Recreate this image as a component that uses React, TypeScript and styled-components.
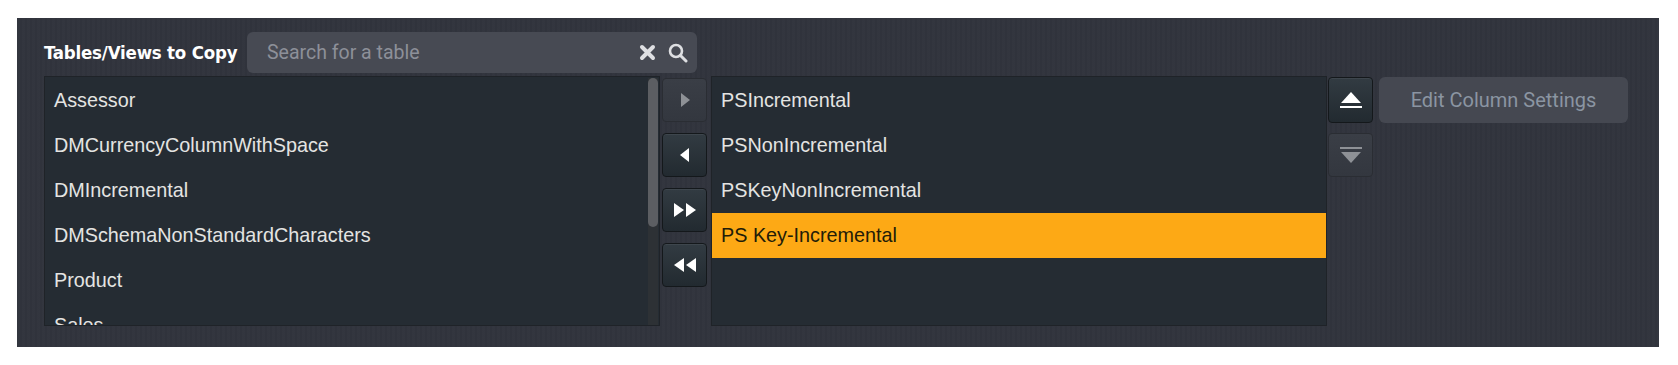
import React from 'react'
import styled, { createGlobalStyle } from 'styled-components'

const GlobalStyle = createGlobalStyle`
  html, body {
    margin: 0;
    padding: 0;
    background: #ffffff;
  }
`

const Panel = styled.div`
  box-sizing: border-box;
  width: 1642px;
  height: 329px;
  margin: 18px 0 0 17px;
  padding: 14px 0 0 27px;
  background-color: #31343d;
  background-image: repeating-linear-gradient(90deg, rgba(255,255,255,0.008) 0px, rgba(255,255,255,0.008) 3px, rgba(0,0,0,0.02) 3px, rgba(0,0,0,0.02) 5px);
  overflow: hidden;
`

const Header = styled.div`
  display: flex;
  align-items: center;
  gap: 12px;
  height: 41px;
  margin-bottom: 3px;
`

const Label = styled.div`
  font-family: "DejaVu Sans Condensed", "DejaVu Sans", sans-serif;
  font-stretch: condensed;
  font-weight: bold;
  font-size: 18.5px;
  color: #ffffff;
  letter-spacing: -0.2px;
  width: 191px;
  white-space: nowrap;
`

const SearchBox = styled.div`
  display: flex;
  align-items: center;
  box-sizing: border-box;
  width: 450px;
  height: 41px;
  padding: 0 9px 0 20px;
  background: #474a53;
  border-radius: 6px;
`

const SearchText = styled.div`
  flex: 1;
  font-family: Roboto, "Liberation Sans", sans-serif;
  font-size: 19.5px;
  color: #8d9099;
`

const SearchIcons = styled.div`
  display: flex;
  align-items: center;
  gap: 12px;
`

const Body = styled.div`
  display: flex;
  align-items: flex-start;
  height: 250px;
`

const List = styled.div<{ $scroll?: boolean }>`
  position: relative;
  box-sizing: border-box;
  width: 616px;
  height: 250px;
  padding-top: 1px;
  background: #252c33;
  border: 1px solid #1f2328;
  overflow: hidden;
  padding-right: ${(p) => (p.$scroll ? '12px' : '0')};
`

const Row = styled.div<{ $selected?: boolean }>`
  display: flex;
  align-items: center;
  height: 45px;
  padding-left: 9px;
  font-family: "Liberation Sans", Arial, sans-serif;
  font-size: 19.8px;
  color: ${(p) => (p.$selected ? '#221c08' : '#e4e4e2')};
  background: ${(p) => (p.$selected ? '#fda915' : 'transparent')};
  white-space: nowrap;
`

const ScrollTrack = styled.div`
  position: absolute;
  top: 1px;
  right: 1px;
  bottom: 0;
  width: 10px;
  background: #2d3135;
`

const ScrollThumb = styled.div`
  width: 10px;
  height: 149px;
  border-radius: 5px;
  background: #5c5e62;
`

const ButtonColumn = styled.div<{ $gap: number; $left: number }>`
  display: flex;
  flex-direction: column;
  gap: ${(p) => p.$gap}px;
  padding-top: 2px;
  margin: 0 4px 0 ${(p) => p.$left}px;
`

const ArrowButton = styled.div<{ $disabled?: boolean; $h?: number }>`
  box-sizing: border-box;
  width: 45px;
  height: ${(p) => p.$h ?? 44}px;
  display: flex;
  align-items: center;
  justify-content: center;
  border-radius: 4px;
  border: 1px solid ${(p) => (p.$disabled ? '#2a2d33' : '#14181b')};
  background: ${(p) =>
    p.$disabled
      ? 'linear-gradient(#3a3e46, #33373f)'
      : 'linear-gradient(#323b42, #222a30)'};
  box-shadow: ${(p) => (p.$disabled ? 'none' : 'inset 0 1px 0 rgba(255,255,255,0.06)')};
`

const RightTools = styled.div`
  display: flex;
  align-items: flex-start;
  gap: 2px;
`

const EditButton = styled.div`
  box-sizing: border-box;
  width: 249px;
  height: 46px;
  margin-top: 1px;
  display: flex;
  align-items: center;
  justify-content: center;
  border-radius: 6px;
  background: #454851;
  font-family: Roboto, "Liberation Sans", sans-serif;
  font-size: 20px;
  color: #8b95a2;
`

const Tri: React.FC<{ dir: 'left' | 'right'; color: string }> = ({ dir, color }) => (
  <svg width="10" height="14" viewBox="0 0 10 14">
    {dir === 'right'
      ? <polygon points="1,0 10,7 1,14" fill={color} />
      : <polygon points="9,0 0,7 9,14" fill={color} />}
  </svg>
)

const DoubleTri: React.FC<{ dir: 'left' | 'right'; color: string }> = ({ dir, color }) => (
  <svg width="22" height="14" viewBox="0 0 22 14">
    {dir === 'right'
      ? <>
          <polygon points="0,0 10,7 0,14" fill={color} />
          <polygon points="12,0 22,7 12,14" fill={color} />
        </>
      : <>
          <polygon points="10,0 0,7 10,14" fill={color} />
          <polygon points="22,0 12,7 22,14" fill={color} />
        </>}
  </svg>
)

const leftItems = [
  'Assessor',
  'DMCurrencyColumnWithSpace',
  'DMIncremental',
  'DMSchemaNonStandardCharacters',
  'Product',
  'Sales',
]

const rightItems = [
  'PSIncremental',
  'PSNonIncremental',
  'PSKeyNonIncremental',
  'PS Key-Incremental',
]

const App: React.FC = () => {
  return <>
    <GlobalStyle />
    <Panel>
      <Header>
        <Label>Tables/Views to Copy</Label>
        <SearchBox>
          <SearchText>Search for a table</SearchText>
          <SearchIcons>
            <svg width="17" height="17" viewBox="0 0 17 17">
              <path d="M3 3 L14 14 M14 3 L3 14" stroke="#dedfe2" strokeWidth="4" strokeLinecap="round" />
            </svg>
            <svg width="20" height="20" viewBox="0 0 20 20">
              <circle cx="8" cy="8" r="6" fill="none" stroke="#dedfe2" strokeWidth="2.6" />
              <path d="M12.5 12.5 L18 18" stroke="#dedfe2" strokeWidth="3" strokeLinecap="round" />
            </svg>
          </SearchIcons>
        </SearchBox>
      </Header>
      <Body>
        <List $scroll>
          {leftItems.map((item) => <Row key={item}>{item}</Row>)}
          <ScrollTrack>
            <ScrollThumb />
          </ScrollTrack>
        </List>
        <ButtonColumn $gap={11} $left={2}>
          <ArrowButton $disabled>
            <Tri dir="right" color="#8e9196" />
          </ArrowButton>
          <ArrowButton>
            <Tri dir="left" color="#ffffff" />
          </ArrowButton>
          <ArrowButton>
            <DoubleTri dir="right" color="#ffffff" />
          </ArrowButton>
          <ArrowButton>
            <DoubleTri dir="left" color="#ffffff" />
          </ArrowButton>
        </ButtonColumn>
        <List>
          {rightItems.map((item, i) => (
            <Row key={item} $selected={i === 3}>{item}</Row>
          ))}
        </List>
        <RightTools>
          <ButtonColumn $gap={10} $left={1}>
            <ArrowButton $h={46} style={{ marginTop: -1 }}>
              <svg width="24" height="18" viewBox="0 0 24 18">
                <polygon points="12,1 22,12 2,12" fill="#ffffff" />
                <rect x="1" y="15" width="22" height="2" fill="#ffffff" />
              </svg>
            </ArrowButton>
            <ArrowButton $disabled>
              <svg width="24" height="18" viewBox="0 0 24 18">
                <rect x="1" y="1" width="22" height="2" fill="#8e9196" />
                <polygon points="2,6 22,6 12,17" fill="#8e9196" />
              </svg>
            </ArrowButton>
          </ButtonColumn>
          <EditButton>Edit Column Settings</EditButton>
        </RightTools>
      </Body>
    </Panel>
  </>
}

export default App
